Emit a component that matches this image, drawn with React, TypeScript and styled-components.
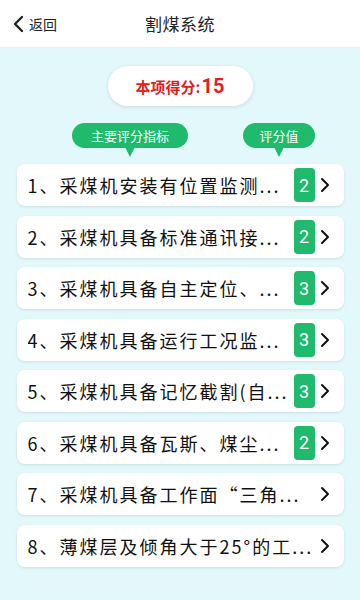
import { createGlobalStyle, styled } from "styled-components";

const GlobalStyle = createGlobalStyle`
    html, body {
        margin: 0;
        padding: 0;
        background: #e3f8fb;
        font-family: "Noto Sans CJK SC", "Noto Sans", sans-serif;
    }
`;

const Page = styled.div`
    width: 360px;
    min-height: 600px;
    background: #e3f8fb;
`;

const Header = styled.div`
    height: 48px;
    background: #fff;
    border-bottom: 1px solid #e8eef0;
    box-sizing: border-box;
    display: grid;
    grid-template-columns: 1fr auto 1fr;
    align-items: center;
`;

const BackButton = styled.div`
    display: flex;
    align-items: center;
    gap: 4px;
    padding-left: 12px;
    font-size: 14px;
    color: #222;
`;

const Title = styled.div`
    font-size: 17px;
    color: #222;
    letter-spacing: 0.5px;
`;

const Content = styled.div`
    display: flex;
    flex-direction: column;
    align-items: center;
    padding-top: 18px;
`;

const ScorePill = styled.div`
    width: 145px;
    height: 40px;
    border-radius: 20px;
    background: #fff;
    box-shadow: 0 1px 4px rgba(0, 0, 0, 0.12);
    display: flex;
    align-items: center;
    justify-content: center;
    color: #e0201f;
    font-weight: bold;
    font-size: 15px;
`;

const ScoreValue = styled.span`
    font-family: "Roboto", "Liberation Sans", sans-serif;
    font-size: 20px;
    font-weight: bold;
    margin-left: 1px;
`;

const LabelRow = styled.div`
    width: 100%;
    height: 34px;
    margin-top: 17px;
    position: relative;
`;

const Bubble = styled.div<{ $left: number; $width: number }>`
    position: absolute;
    top: 0;
    left: ${(p) => p.$left}px;
    width: ${(p) => p.$width}px;
    height: 25px;
    border-radius: 13px;
    background: #1fba6b;
    color: #fff;
    font-size: 13px;
    display: flex;
    align-items: center;
    justify-content: center;

    &::after {
        content: "";
        position: absolute;
        left: 50%;
        bottom: -9px;
        margin-left: -5px;
        border-left: 5px solid transparent;
        border-right: 5px solid transparent;
        border-top: 10px solid #1fba6b;
    }
`;

const List = styled.div`
    width: 327px;
    display: flex;
    flex-direction: column;
    gap: 9.5px;
    margin-top: 7px;
`;

const Card = styled.div`
    height: 42px;
    background: #fff;
    border-radius: 8px;
    box-shadow: 0 1px 3px rgba(0, 0, 0, 0.1);
    display: flex;
    align-items: center;
    padding: 0 14px 0 11px;
`;

const CardText = styled.div`
    flex: 1;
    font-size: 18px;
    letter-spacing: 2px;
    color: #111;
    white-space: nowrap;
    overflow: hidden;
`;

const Badge = styled.div`
    width: 21px;
    height: 34px;
    border-radius: 4px;
    background: #1fba6b;
    color: #fff;
    font-family: "Roboto", "Liberation Sans", sans-serif;
    font-size: 18px;
    display: flex;
    align-items: center;
    justify-content: center;
    margin-right: 5px;
`;

const Chevron = ({ size = 10, height = 16, stroke = 2 }: { size?: number; height?: number; stroke?: number }) => (
    <svg width={size} height={height} viewBox={`0 0 ${size} ${height}`}>
        <path
            d={`M2 2 L${size - 2} ${height / 2} L2 ${height - 2}`}
            fill="none"
            stroke="#111"
            strokeWidth={stroke}
            strokeLinecap="round"
            strokeLinejoin="round"
        />
    </svg>
);

const BackIcon = () => (
    <svg width="13" height="18" viewBox="0 0 13 18">
        <path d="M10 2 L3 9 L10 16" fill="none" stroke="#222" strokeWidth="2.4" strokeLinecap="round" strokeLinejoin="round" />
    </svg>
);

type Item = {
    text: string;
    score?: number;
};

const ITEMS: Item[] = [
    { text: "1、采煤机安装有位置监测...", score: 2 },
    { text: "2、采煤机具备标准通讯接...", score: 2 },
    { text: "3、采煤机具备自主定位、...", score: 3 },
    { text: "4、采煤机具备运行工况监...", score: 3 },
    { text: "5、采煤机具备记忆截割(自...", score: 3 },
    { text: "6、采煤机具备瓦斯、煤尘...", score: 2 },
    { text: "7、采煤机具备工作面“三角..." },
    { text: "8、薄煤层及倾角大于25°的工..." },
];

export default function App() {
    return (
        <Page>
            <GlobalStyle />
            <Header>
                <BackButton>
                    <BackIcon />
                    返回
                </BackButton>
                <Title>割煤系统</Title>
                <div />
            </Header>
            <Content>
                <ScorePill>
                    本项得分:<ScoreValue>15</ScoreValue>
                </ScorePill>
                <LabelRow>
                    <Bubble $left={72} $width={116}>
                        主要评分指标
                    </Bubble>
                    <Bubble $left={243} $width={72}>
                        评分值
                    </Bubble>
                </LabelRow>
                <List>
                    {ITEMS.map((item) => (
                        <Card key={item.text}>
                            <CardText>{item.text}</CardText>
                            {item.score !== undefined && <Badge>{item.score}</Badge>}
                            <Chevron />
                        </Card>
                    ))}
                </List>
            </Content>
        </Page>
    );
}
